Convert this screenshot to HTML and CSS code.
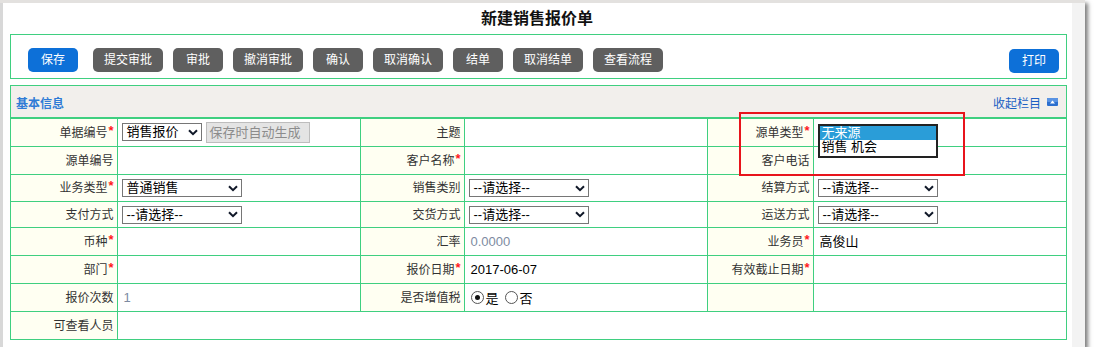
FILE: index.html
```html
<!DOCTYPE html>
<html lang="zh-CN">
<head>
<meta charset="utf-8">
<title>新建销售报价单</title>
<link rel="stylesheet" href="styles.css">
</head>
<body>
<div class="window">
  <div class="content">
    <h1 class="title">新建销售报价单</h1>
    <div class="toolbar">
      <button class="btn btn-blue btn-save">保存</button>
      <button class="btn">提交审批</button>
      <button class="btn">审批</button>
      <button class="btn">撤消审批</button>
      <button class="btn">确认</button>
      <button class="btn">取消确认</button>
      <button class="btn">结单</button>
      <button class="btn">取消结单</button>
      <button class="btn">查看流程</button>
      <button class="btn btn-blue btn-print">打印</button>
    </div>
    <div class="panel">
      <div class="panel-head">
        <span class="panel-title">基本信息</span>
        <span class="collapse">收起栏目
          <svg class="collapse-icon" width="11" height="8" viewBox="0 0 11 8"><rect x="0" y="0" width="11" height="8" rx="1" fill="#2c6fcf"/><rect x="0" y="0" width="11" height="4" rx="1" fill="#5a93e3"/><polygon points="3,5.5 5.5,2.5 8,5.5" fill="#ffffff"/></svg>
        </span>
      </div>
      <table class="form">
        <colgroup>
          <col class="c-lab1"><col class="c-val"><col class="c-lab2"><col class="c-val"><col class="c-lab3"><col>
        </colgroup>
        <tr class="r-std">
          <td class="lab">单据编号<i class="req">*</i></td>
          <td class="val">
            <div class="inline">
              <span class="sel sel-s">销售报价<svg class="chev" width="10" height="7" viewBox="0 0 10 7"><polyline points="1,1.2 5,5.2 9,1.2" fill="none" stroke="#101828" stroke-width="2"/></svg></span>
              <span class="auto">保存时自动生成</span>
            </div>
          </td>
          <td class="lab">主题</td>
          <td class="val"></td>
          <td class="lab">源单类型<i class="req">*</i></td>
          <td class="val pop">
            <div class="listbox">
              <div class="opt opt-on">无来源</div>
              <div class="opt">销售 机会</div>
            </div>
          </td>
        </tr>
        <tr class="r-std">
          <td class="lab">源单编号</td>
          <td class="val"></td>
          <td class="lab">客户名称<i class="req">*</i></td>
          <td class="val"></td>
          <td class="lab">客户电话</td>
          <td class="val"></td>
        </tr>
        <tr class="r-sel1">
          <td class="lab">业务类型<i class="req">*</i></td>
          <td class="val"><span class="sel">普通销售<svg class="chev" width="10" height="7" viewBox="0 0 10 7"><polyline points="1,1.2 5,5.2 9,1.2" fill="none" stroke="#101828" stroke-width="2"/></svg></span></td>
          <td class="lab">销售类别</td>
          <td class="val"><span class="sel">--请选择--<svg class="chev" width="10" height="7" viewBox="0 0 10 7"><polyline points="1,1.2 5,5.2 9,1.2" fill="none" stroke="#101828" stroke-width="2"/></svg></span></td>
          <td class="lab">结算方式</td>
          <td class="val"><span class="sel">--请选择--<svg class="chev" width="10" height="7" viewBox="0 0 10 7"><polyline points="1,1.2 5,5.2 9,1.2" fill="none" stroke="#101828" stroke-width="2"/></svg></span></td>
        </tr>
        <tr class="r-sel2">
          <td class="lab">支付方式</td>
          <td class="val"><span class="sel">--请选择--<svg class="chev" width="10" height="7" viewBox="0 0 10 7"><polyline points="1,1.2 5,5.2 9,1.2" fill="none" stroke="#101828" stroke-width="2"/></svg></span></td>
          <td class="lab">交货方式</td>
          <td class="val"><span class="sel">--请选择--<svg class="chev" width="10" height="7" viewBox="0 0 10 7"><polyline points="1,1.2 5,5.2 9,1.2" fill="none" stroke="#101828" stroke-width="2"/></svg></span></td>
          <td class="lab">运送方式</td>
          <td class="val"><span class="sel">--请选择--<svg class="chev" width="10" height="7" viewBox="0 0 10 7"><polyline points="1,1.2 5,5.2 9,1.2" fill="none" stroke="#101828" stroke-width="2"/></svg></span></td>
        </tr>
        <tr class="r-std">
          <td class="lab">币种<i class="req">*</i></td>
          <td class="val"></td>
          <td class="lab">汇率</td>
          <td class="val txt muted">0.0000</td>
          <td class="lab">业务员<i class="req">*</i></td>
          <td class="val txt">高俊山</td>
        </tr>
        <tr class="r-std">
          <td class="lab">部门<i class="req">*</i></td>
          <td class="val"></td>
          <td class="lab">报价日期<i class="req">*</i></td>
          <td class="val txt">2017-06-07</td>
          <td class="lab">有效截止日期<i class="req">*</i></td>
          <td class="val"></td>
        </tr>
        <tr class="r-std">
          <td class="lab">报价次数</td>
          <td class="val txt muted">1</td>
          <td class="lab">是否增值税</td>
          <td class="val">
            <div class="radios">
              <span class="radio radio-on"></span><span class="rlab">是</span>
              <span class="radio"></span><span class="rlab">否</span>
            </div>
          </td>
          <td class="lab"></td>
          <td class="val"></td>
        </tr>
        <tr class="r-std">
          <td class="lab">可查看人员</td>
          <td class="val" colspan="5"></td>
        </tr>
      </table>
    </div>
  </div>
  <div class="rail"></div>
  <div class="highlight"></div>
</div>
</body>
</html>
```

FILE: styles.css
```css
html, body {
  margin: 0;
  padding: 0;
  background: #ffffff;
}

body {
  font-family: "Liberation Sans", "Noto Sans CJK SC", sans-serif;
  color: #333;
}

.window {
  position: relative;
  display: flex;
  width: 1085px;
  height: 344px;
  border-top: 3px solid #e3e1df;
  background: #f3f3f3;
  box-shadow: 3px 3px 4px rgba(0, 0, 0, 0.5);
}

.content {
  width: 1062px;
  border-left: 3px solid #d8d8d8;
  background: #ffffff;
  padding-left: 7px;
}

.rail {
  width: 13px;
  background: #f3f3f3;
}

.title {
  margin: 0;
  height: 31px;
  line-height: 32px;
  font-size: 16px;
  font-weight: bold;
  color: #111;
  text-align: center;
  padding-right: 8px;
}

.toolbar {
  display: flex;
  align-items: flex-start;
  gap: 10px;
  width: 1055px;
  height: 43px;
  border: 1px solid #3fcf80;
  box-sizing: content-box;
  padding: 0;
}

.toolbar .btn {
  margin-top: 13px;
}

.toolbar .btn-save {
  margin-left: 17px;
  margin-right: 5px;
}

.btn {
  height: 24px;
  min-width: 50px;
  padding: 0 11px;
  border: 0;
  border-radius: 5px;
  background: #5f5f5f;
  color: #ffffff;
  font-family: "Liberation Sans", "Noto Sans CJK SC", sans-serif;
  font-size: 12px;
  line-height: 24px;
}

.btn-blue {
  background: #0d70d8;
}

.toolbar .btn-print {
  margin-left: auto;
  margin-right: 7px;
  margin-top: 14px;
}

.panel {
  margin-top: 6px;
  width: 1055px;
  border: 1px solid #3fcf80;
}

.panel-head {
  display: flex;
  align-items: center;
  justify-content: space-between;
  height: 31px;
  background: #f2efec;
  border-bottom: 2px solid #3fcf80;
  padding: 0 8px 0 5px;
}

.panel-title {
  font-size: 12px;
  font-weight: bold;
  color: #2f7bd6;
  padding-top: 1px;
}

.collapse {
  display: flex;
  align-items: center;
  gap: 6px;
  font-size: 12px;
  color: #1d5fc4;
  padding-top: 1px;
}

.collapse-icon {
  display: block;
}

.form {
  width: 1055px;
  border-collapse: collapse;
  border-style: hidden;
  table-layout: fixed;
}

.c-lab1 { width: 106px; }
.c-val { width: 243px; }
.c-lab2 { width: 104px; }
.c-lab3 { width: 106px; }

.form td {
  border: 1px solid #3fcf80;
  padding: 0;
  font-size: 12px;
  line-height: 16px;
  vertical-align: middle;
}

.r-std td { height: 27px; }
.r-sel1 td { height: 26px; }
.r-sel2 td { height: 25px; }

.lab {
  background: #fffff2;
  text-align: right;
  padding-right: 3px !important;
  color: #333;
  white-space: nowrap;
}

.req {
  font-style: normal;
  font-weight: bold;
  color: #ff1a1a;
  font-size: 13px;
  line-height: 12px;
  vertical-align: 2px;
  margin-left: 1px;
}

.val {
  background: #ffffff;
  padding-left: 4px !important;
}

.txt {
  padding-left: 6px !important;
  font-size: 13px !important;
  color: #000;
}

.muted {
  color: #7d8ba1;
}

.inline {
  display: flex;
  align-items: flex-start;
  gap: 4px;
}

.sel {
  display: inline-flex;
  align-items: center;
  justify-content: space-between;
  box-sizing: border-box;
  width: 120px;
  height: 18px;
  border: 1px solid #767676;
  padding: 0 3px 0 4px;
  background: #ffffff;
  font-size: 13px;
  line-height: 16px;
  color: #000;
  vertical-align: middle;
}

.sel-s {
  width: 80px;
  margin-top: 1px;
}

.chev {
  display: block;
  flex: none;
}

.auto {
  display: inline-block;
  box-sizing: border-box;
  width: 104px;
  height: 21px;
  border: 1px solid #bdbdbd;
  background: #e4e4e4;
  color: #8c8c8c;
  font-size: 13px;
  line-height: 19px;
  padding-left: 3px;
  white-space: nowrap;
}

.pop {
  position: relative;
}

.listbox {
  position: absolute;
  left: 4px;
  top: 5px;
  width: 120px;
  height: 34px;
  box-sizing: border-box;
  border: 2px solid #222;
  background: #ffffff;
  z-index: 2;
}

.opt {
  height: 14px;
  line-height: 14px;
  font-size: 13px;
  color: #000;
  padding-left: 2px;
  white-space: nowrap;
}

.opt-on {
  background: #2a9dd8;
  color: #ffffff;
}

.radios {
  display: flex;
  align-items: center;
  padding-left: 2px;
  font-size: 13px;
  color: #000;
}

.radio {
  box-sizing: border-box;
  width: 13px;
  height: 13px;
  border: 1px solid #555;
  border-radius: 50%;
  background: #fff;
  position: relative;
}

.radio-on::after {
  content: "";
  position: absolute;
  left: 3px;
  top: 3px;
  width: 5px;
  height: 5px;
  border-radius: 50%;
  background: #111;
}

.rlab {
  margin: 0 6px 0 2px;
  padding-top: 2px;
}

.highlight {
  position: absolute;
  left: 739px;
  top: 109px;
  width: 222px;
  height: 60px;
  border: 2px solid #e8141c;
  z-index: 3;
  pointer-events: none;
}
```
